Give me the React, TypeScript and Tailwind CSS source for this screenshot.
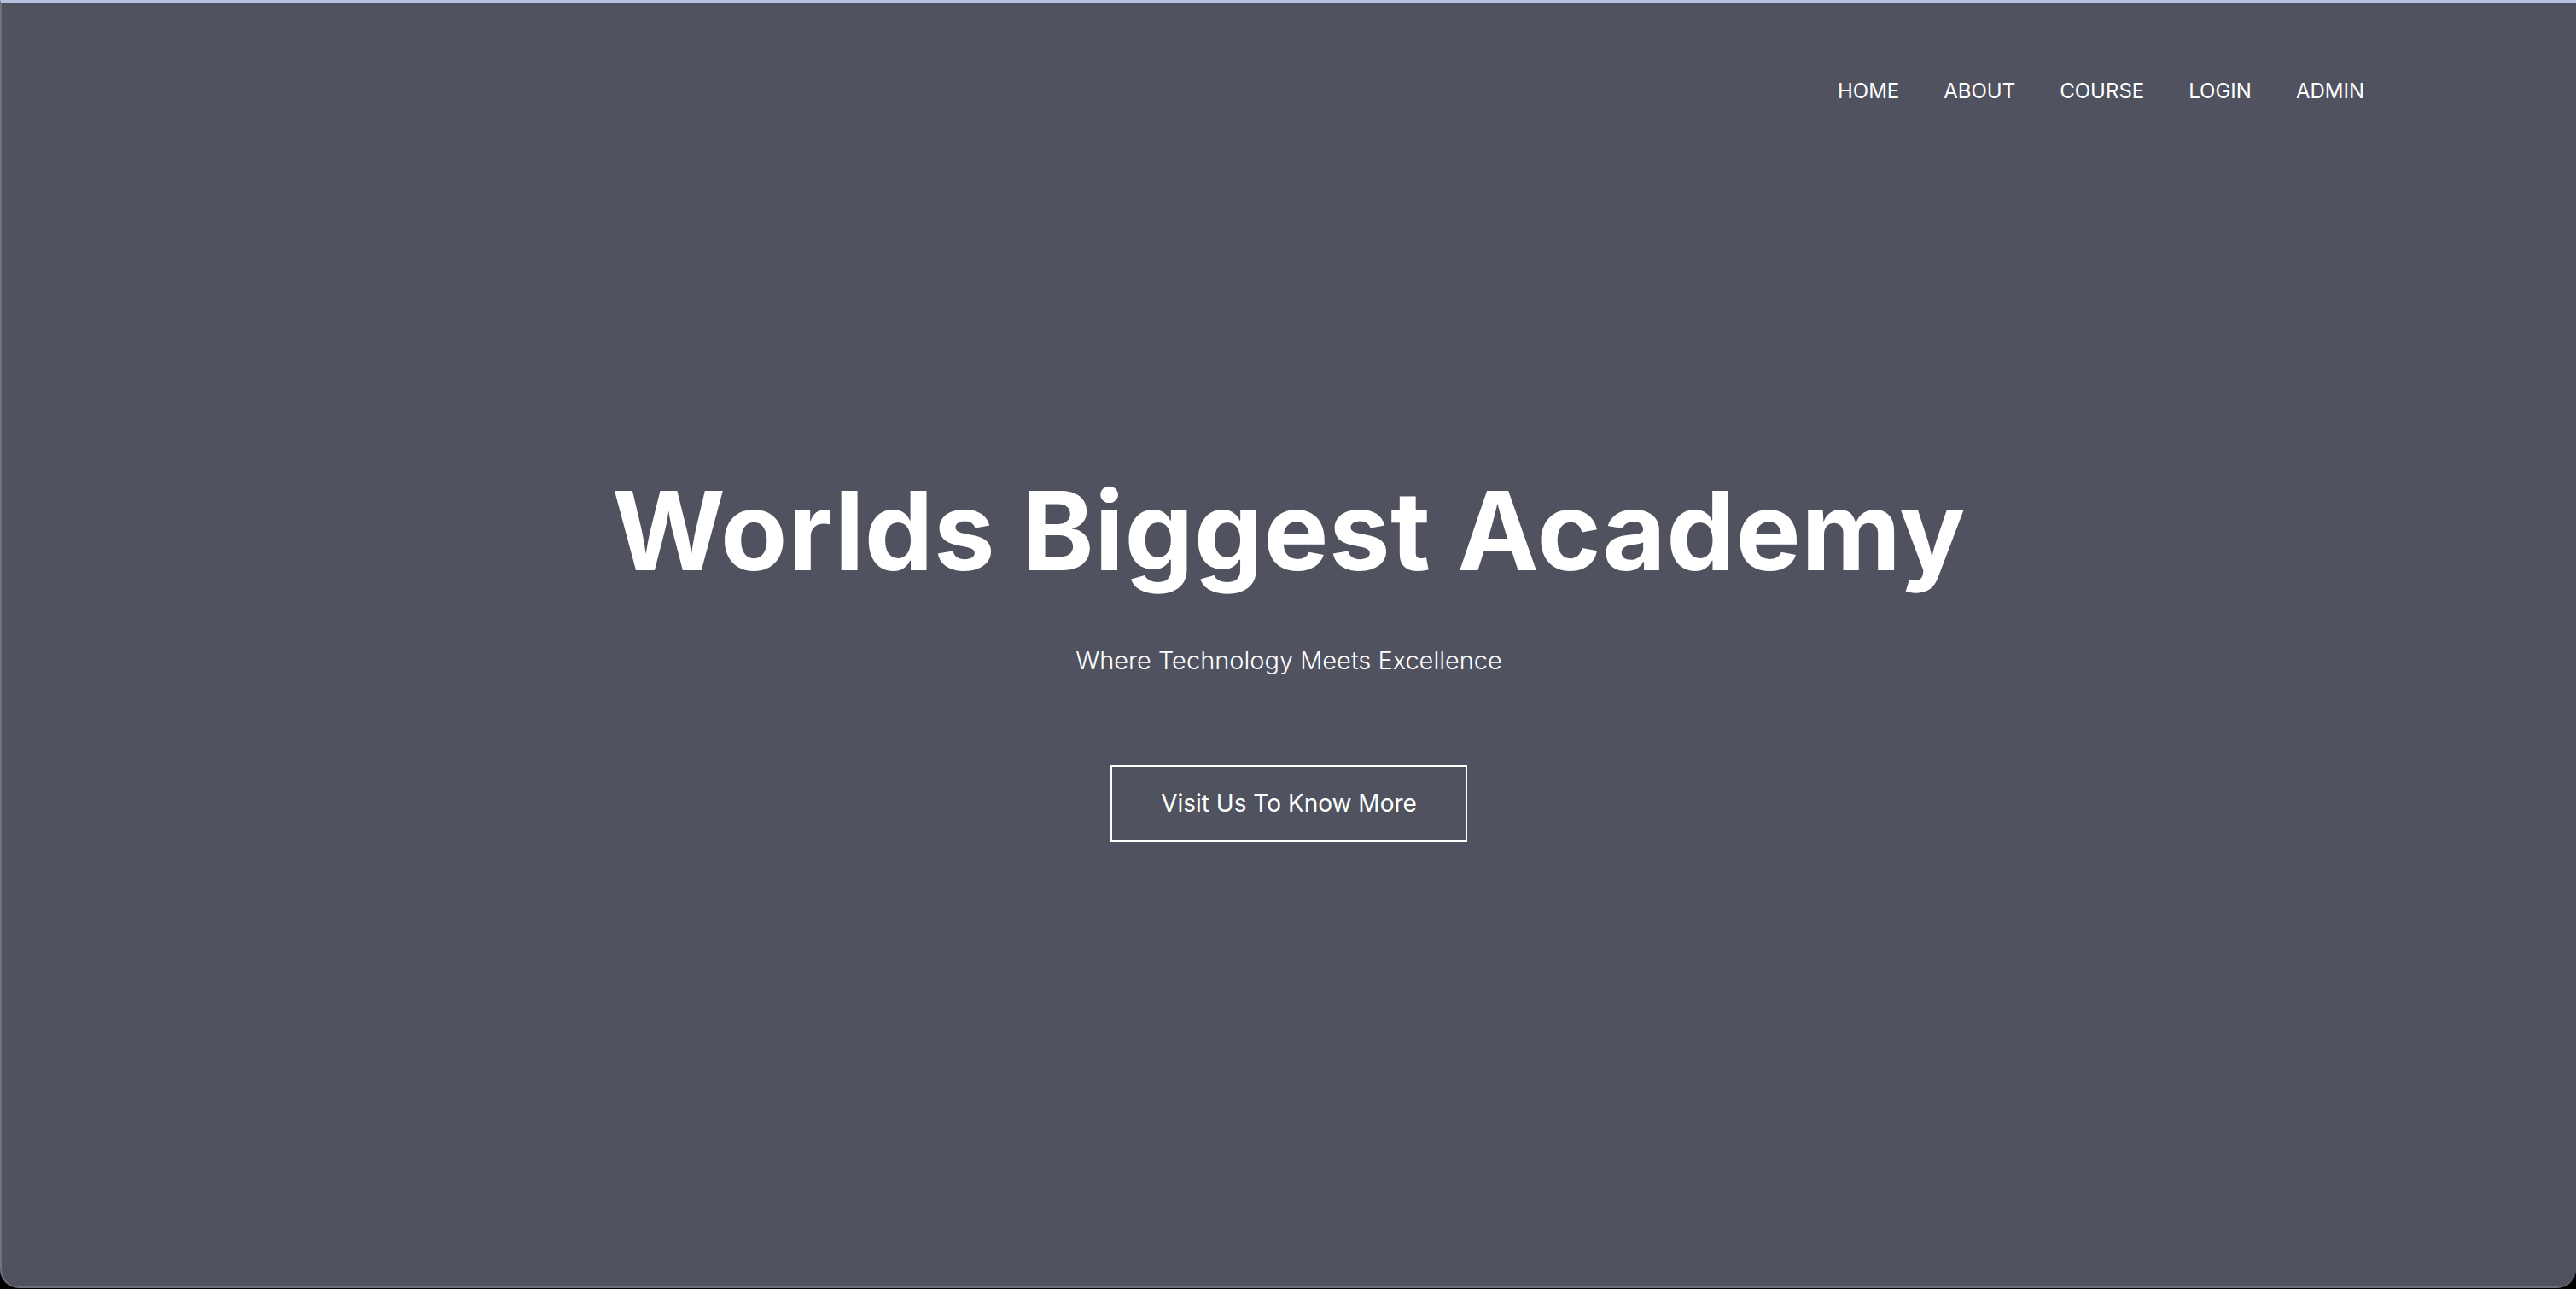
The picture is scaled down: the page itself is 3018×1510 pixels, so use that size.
const links = ["HOME", "ABOUT", "COURSE", "LOGIN", "ADMIN"];

export default function App() {
  return (
    <div className="h-[1510px] w-[3018px] bg-black">
      <div
        className="flex h-[1509px] flex-col rounded-b-[22px] border-t-[4px] border-l-2 border-b-2 border-t-[#b6c2de] border-l-[#70737d] border-b-[#6a6d78] bg-[#50535f] text-white"
        style={{ fontFamily: "Inter, 'Open Sans', sans-serif" }}
      >
        <nav className="flex justify-end gap-[52px] pt-[88px] pr-[248px]">
          {links.map((l) => (
            <a key={l} className="text-[24px] leading-[30px] font-normal">
              {l}
            </a>
          ))}
        </nav>

        <div className="flex flex-col items-center pt-[436px]">
          <h1 className="text-[128px] leading-[128px] font-bold tracking-[0.5px]">
            Worlds Biggest Academy
          </h1>
          <p className="mt-[70px] text-[29px] leading-[36px] font-light">
            Where Technology Meets Excellence
          </p>
          <button className="mt-[104px] flex h-[90px] w-[418px] items-center justify-center border-2 border-white text-[28px] font-normal">
            Visit Us To Know More
          </button>
        </div>
      </div>
    </div>
  );
}
